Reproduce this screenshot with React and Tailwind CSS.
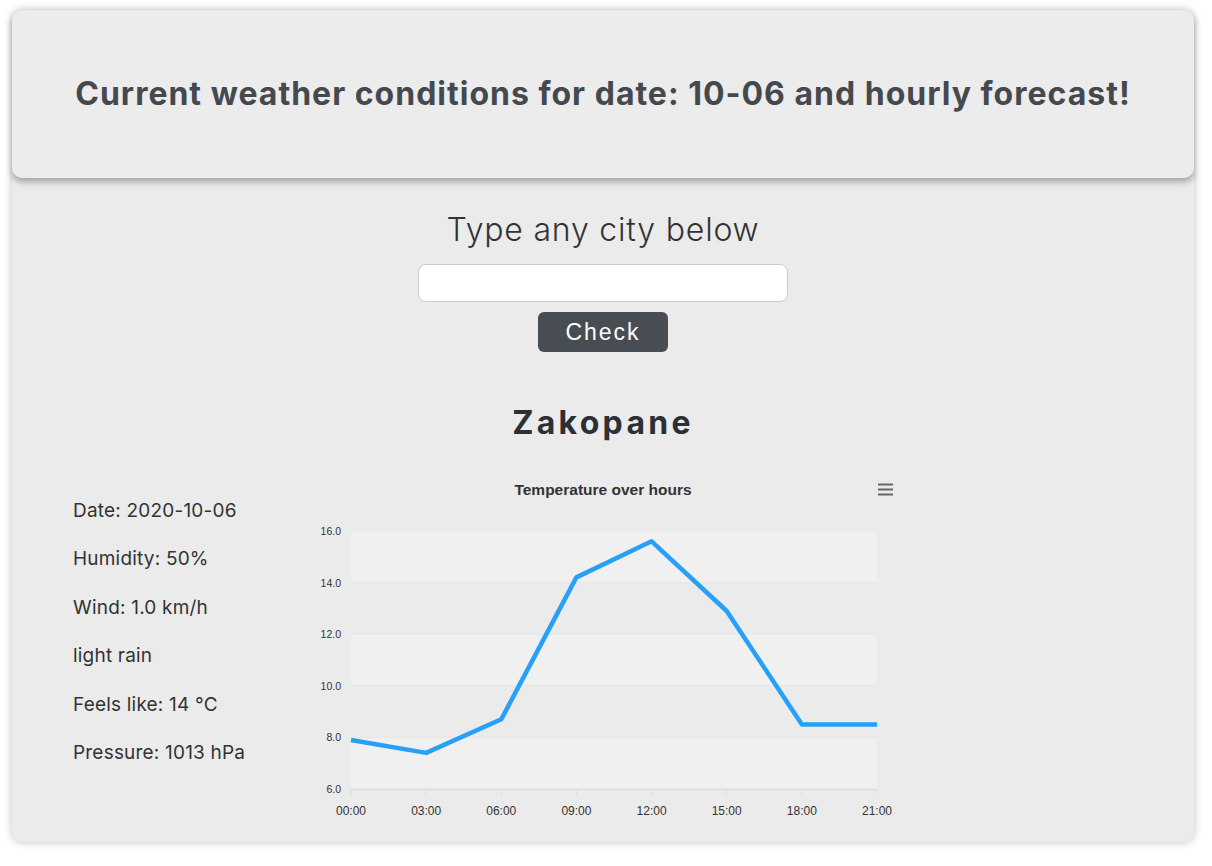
import React from "react";

const data = [7.9, 7.4, 8.7, 14.2, 15.6, 12.9, 8.5, 8.5];
const labels = ["00:00", "03:00", "06:00", "09:00", "12:00", "15:00", "18:00", "21:00"];
const X0 = 51, X1 = 577, Y0 = 61, YS = 25.8;
const xs = (i) => X0 + (i * (X1 - X0)) / 7;
const ys = (v) => Y0 + (16 - v) * YS;

function Chart() {
  const pts = data.map((v, i) => `${xs(i).toFixed(1)},${ys(v).toFixed(1)}`).join(" ");
  const ticks = [16, 14, 12, 10, 8, 6];
  return (
    <svg width="620" height="360" viewBox="0 0 620 360" className="block">
      {[16, 12, 8].map((v) => (
        <rect key={v} x={X0} y={ys(v)} width={X1 - X0} height={YS * 2} fill="#f0f0f0" />
      ))}
      {ticks.map((v) => (
        <line key={v} x1={X0} x2={X1} y1={ys(v)} y2={ys(v)} stroke="#e6e6e6" strokeWidth="1" />
      ))}
      <line x1={X0} x2={X1} y1={ys(6) + 0.5} y2={ys(6) + 0.5} stroke="#dedede" strokeWidth="1.5" />
      {labels.map((l, i) => (
        <line key={l} x1={xs(i)} x2={xs(i)} y1={ys(6)} y2={ys(6) + 6} stroke="#dedede" strokeWidth="1" />
      ))}
      {ticks.map((v) => (
        <text key={v} x="41" y={ys(v) + 4} textAnchor="end" fontSize="10.5" fill="#333" fontFamily="'Liberation Sans', Arial, sans-serif">
          {v.toFixed(1)}
        </text>
      ))}
      {labels.map((l, i) => (
        <text key={l} x={xs(i)} y="345" textAnchor="middle" fontSize="12" fill="#333" fontFamily="'Liberation Sans', Arial, sans-serif">
          {l}
        </text>
      ))}
      <polyline points={pts} fill="none" stroke="#27a0f8" strokeWidth="4.5" strokeLinejoin="round" strokeLinecap="butt" />
      <text x="303" y="25" textAnchor="middle" fontSize="15.5" fontWeight="bold" fill="#333" fontFamily="'Liberation Sans', Arial, sans-serif">
        Temperature over hours
      </text>
      <g stroke="#666" strokeWidth="2">
        <line x1="578" x2="593" y1="14.5" y2="14.5" />
        <line x1="578" x2="593" y1="19.5" y2="19.5" />
        <line x1="578" x2="593" y1="24.5" y2="24.5" />
      </g>
    </svg>
  );
}

export default function App() {
  const items = [
    "Date: 2020-10-06",
    "Humidity: 50%",
    "Wind: 1.0 km/h",
    "light rain",
    "Feels like: 14 °C",
    "Pressure: 1013 hPa",
  ];
  return (
    <div className="min-h-screen bg-white pt-[10px] px-[12px] font-['Inter',sans-serif]" style={{ width: 1212 }}>
      <div className="w-[1182px] rounded-[10px] bg-[#ebebeb] shadow-[0_0_8px_rgba(0,0,0,0.25)]">
        <header className="h-[168px] rounded-[10px] bg-[#ececec] shadow-[0_4px_6px_rgba(0,0,0,0.3)] flex items-center justify-center">
          <h1 className="text-[32px] font-bold text-[#45494e] tracking-[1px] whitespace-nowrap">
            Current weather conditions for date: 10-06 and hourly forecast!
          </h1>
        </header>
        <div className="flex flex-col items-center pt-[33px]">
          <h2 className="text-[32px] leading-[38px] font-light tracking-[0.8px] text-[#333]">Type any city below</h2>
          <input type="text" className="mt-[15px] w-[370px] h-[38px] rounded-[8px] border border-[#cccccc] bg-white outline-none" />
          <button className="mt-[10px] w-[130px] h-[40px] rounded-[6px] bg-[#484d54] text-white text-[23px] tracking-[2px] font-['Liberation_Sans',Arial,sans-serif]">
            Check
          </button>
          <h3 className="mt-[51px] text-[32px] leading-[40px] font-bold tracking-[3.3px] text-[#2b3036]">Zakopane</h3>
        </div>
        <div className="flex pl-[61px] mt-[27px] pb-[12px]">
          <div className="w-[227px] pt-[17px] flex flex-col">
            {items.map((t) => (
              <div key={t} className="h-[48.4px] flex items-center text-[19px] tracking-[0.2px] text-[#333]">
                {t}
              </div>
            ))}
          </div>
          <Chart />
        </div>
      </div>
    </div>
  );
}
